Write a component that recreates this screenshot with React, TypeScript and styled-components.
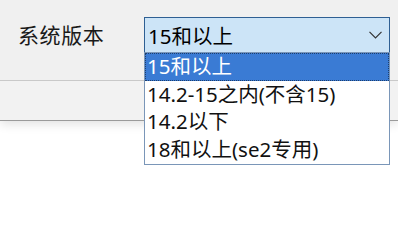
import styled, { createGlobalStyle } from "styled-components";
import { useState } from "react";

const GlobalStyle = createGlobalStyle`
  html, body, #root {
    margin: 0;
    padding: 0;
    height: 100%;
    background: #ffffff;
  }
  body {
    font-family: "Noto Sans", "Noto Sans CJK SC", sans-serif;
    color: #000000;
  }
`;

const Page = styled.div`
  min-height: 100vh;
  background: #ffffff;
`;

const Toolbar = styled.div`
  position: relative;
  z-index: 2;
  height: 81px;
  box-sizing: border-box;
  background: #f0f0f0;
  border-bottom: 1px solid #c9c9c9;
  display: flex;
  align-items: flex-start;
  padding: 17px 0 0 18px;
`;

const SubBar = styled.div`
  position: relative;
  z-index: 1;
  height: 40px;
  box-sizing: border-box;
  background: #f2f2f2;
  border-bottom: 1px solid #9a9a9a;
  box-shadow: 0 3px 10px rgba(0, 0, 0, 0.12);
`;

const Label = styled.span`
  width: 126px;
  height: 36px;
  line-height: 36px;
  font-size: 21px;
  letter-spacing: 0.6px;
  color: #1a1a1a;
`;

const SelectWrap = styled.div`
  position: relative;
  width: 246px;
`;

const SelectBox = styled.button`
  width: 100%;
  height: 36px;
  box-sizing: border-box;
  display: flex;
  align-items: center;
  justify-content: space-between;
  padding: 0 7px 0 3px;
  background: #cce4f7;
  border: 1px solid #2e5f93;
  font: inherit;
  font-size: 20.5px;
  color: #000;
  cursor: pointer;
`;

const List = styled.ul`
  position: absolute;
  top: 35px;
  left: 0;
  width: 100%;
  box-sizing: border-box;
  margin: 0;
  padding: 0 0 1px;
  list-style: none;
  background: #ffffff;
  border: 1px solid #7a96b8;
  z-index: 3;
`;

const Option = styled.li<{ $active: boolean }>`
  height: 27.5px;
  line-height: 27.5px;
  box-sizing: border-box;
  padding-left: 2px;
  font-size: 20.5px;
  white-space: nowrap;
  background: ${(p) => (p.$active ? "#3a7bd4" : "transparent")};
  color: ${(p) => (p.$active ? "#ffffff" : "#111111")};
  outline: ${(p) => (p.$active ? "1px dotted #1d3f6e" : "none")};
  outline-offset: -1px;
  cursor: default;
`;

const options = [
  "15和以上",
  "14.2-15之内(不含15)",
  "14.2以下",
  "18和以上(se2专用)",
];

function Chevron() {
  return (
    <svg width="13" height="8" viewBox="0 0 13 8">
      <path d="M0.5 0.8 L6.5 6.8 L12.5 0.8" fill="none" stroke="#333" strokeWidth="1.2" />
    </svg>
  );
}

export default function App() {
  const [selected, setSelected] = useState(0);
  const [open, setOpen] = useState(true);

  return (
    <Page>
      <GlobalStyle />
      <Toolbar>
        <Label>系统版本</Label>
        <SelectWrap>
          <SelectBox onClick={() => setOpen((o) => !o)}>
            <span>{options[selected]}</span>
            <Chevron />
          </SelectBox>
          {open && (
            <List>
              {options.map((opt, i) => (
                <Option
                  key={opt}
                  $active={i === selected}
                  onClick={() => {
                    setSelected(i);
                    setOpen(false);
                  }}
                >
                  {opt}
                </Option>
              ))}
            </List>
          )}
        </SelectWrap>
      </Toolbar>
      <SubBar />
    </Page>
  );
}
